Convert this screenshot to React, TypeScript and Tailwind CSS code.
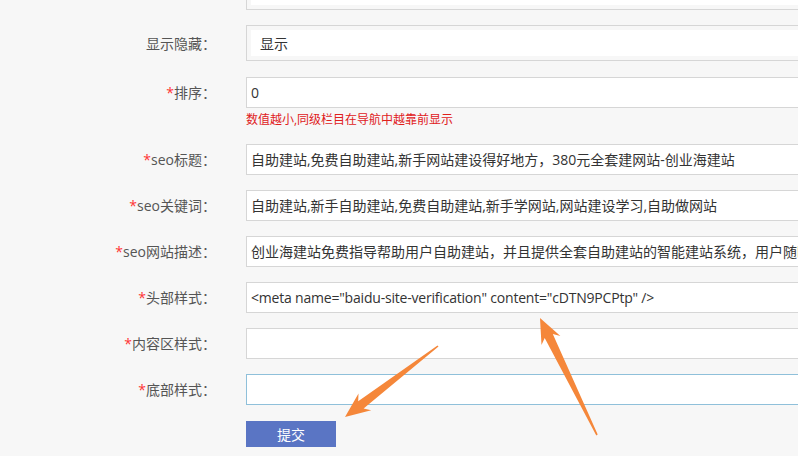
import React from "react";

const FONT = "font-['Open_Sans','Noto_Sans_CJK_SC',sans-serif]";

function arrowPoints(tip: [number, number], tail: [number, number]) {
  const [tx, ty] = tip;
  const [ex, ey] = tail;
  const len = Math.hypot(ex - tx, ey - ty);
  const ux = (ex - tx) / len;
  const uy = (ey - ty) / len;
  const nx = -uy;
  const ny = ux;
  const head = 25;
  const wing = 10.5;
  const shaft = 4.5;
  const bx = tx + ux * head;
  const by = ty + uy * head;
  const sx = tx + ux * (head - 5);
  const sy = ty + uy * (head - 5);
  const pts = [
    [tx, ty],
    [bx + nx * wing, by + ny * wing],
    [sx + nx * shaft, sy + ny * shaft],
    [ex + nx * 0.8, ey + ny * 0.8],
    [ex - nx * 0.8, ey - ny * 0.8],
    [sx - nx * shaft, sy - ny * shaft],
    [bx - nx * wing, by - ny * wing],
  ];
  return pts.map((p) => `${p[0].toFixed(1)},${p[1].toFixed(1)}`).join(" ");
}

function Label({ text, required }: { text?: string; required?: boolean }) {
  return (
    <div className="w-[216px] shrink-0 text-right text-[14px] text-[#555]">
      {required && <span className="text-[#f33]">*</span>}
      {text && `${text}：`}
    </div>
  );
}

function SelectBox({ value }: { value: string }) {
  return (
    <div className="ml-[30px] h-[36px] w-[620px] shrink-0 border border-[#d6d6d6] bg-[#f7f7f7] p-[4px]">
      <div className="flex h-full items-center bg-white pl-[9px] text-[14px] text-[#333]">{value}</div>
    </div>
  );
}

function InputBox({ value, focus, tight }: { value?: string; focus?: boolean; tight?: boolean }) {
  return (
    <div
      className={`ml-[30px] flex h-[31px] w-[620px] shrink-0 items-center overflow-hidden whitespace-nowrap border bg-white pl-[4px] text-[14px] text-[#333] ${
        focus ? "border-[#8fc0da]" : "border-[#d6d6d6]"
      } ${tight ? "tracking-[-0.2px]" : ""}`}
    >
      {value}
    </div>
  );
}

const FIELDS = [
  { label: "seo标题", value: "自助建站,免费自助建站,新手网站建设得好地方，380元全套建网站-创业海建站" },
  { label: "seo关键词", value: "自助建站,新手自助建站,免费自助建站,新手学网站,网站建设学习,自助做网站" },
  { label: "seo网站描述", value: "创业海建站免费指导帮助用户自助建站，并且提供全套自助建站的智能建站系统，用户随时随地都可以建站" },
  { label: "头部样式", value: '<meta name="baidu-site-verification" content="cDTN9PCPtp" />', tight: true },
  { label: "内容区样式", value: "" },
];

export default function App() {
  return (
    <div className={`relative h-[456px] w-[798px] overflow-hidden bg-[#f7f7f7] ${FONT}`}>
      <div className="flex flex-col">
        {/* field scrolled mostly out of view */}
        <div className="mt-[-26px] flex items-center">
          <Label />
          <SelectBox value="顶级栏目" />
        </div>

        <div className="mt-[15px] flex items-center">
          <Label text="显示隐藏" />
          <SelectBox value="显示" />
        </div>

        <div className="mt-[16px] flex items-center">
          <Label text="排序" required />
          <InputBox value="0" />
        </div>
        <div className="ml-[246px] mt-[3px] h-[18px] text-[12px] leading-[18px] text-[#e0201c]">
          数值越小,同级栏目在导航中越靠前显示
        </div>

        <div className="mt-[15px] flex flex-col gap-[15px]">
          {FIELDS.map((f) => (
            <div key={f.label} className="flex items-center">
              <Label text={f.label} required />
              <InputBox value={f.value} tight={f.tight} />
            </div>
          ))}
          <div className="flex items-center">
            <Label text="底部样式" required />
            <InputBox focus />
          </div>
        </div>

        <div className="ml-[246px] mt-[16px]">
          <button className="h-[26px] w-[90px] bg-[#5a75c4] text-[14px] text-white">提交</button>
        </div>
      </div>

      <svg className="pointer-events-none absolute left-0 top-0" width="798" height="456">
        <polygon points={arrowPoints([345, 417], [438, 346])} fill="#f5873a" />
        <polygon points={arrowPoints([540, 318], [597, 435])} fill="#f5873a" />
      </svg>
    </div>
  );
}
